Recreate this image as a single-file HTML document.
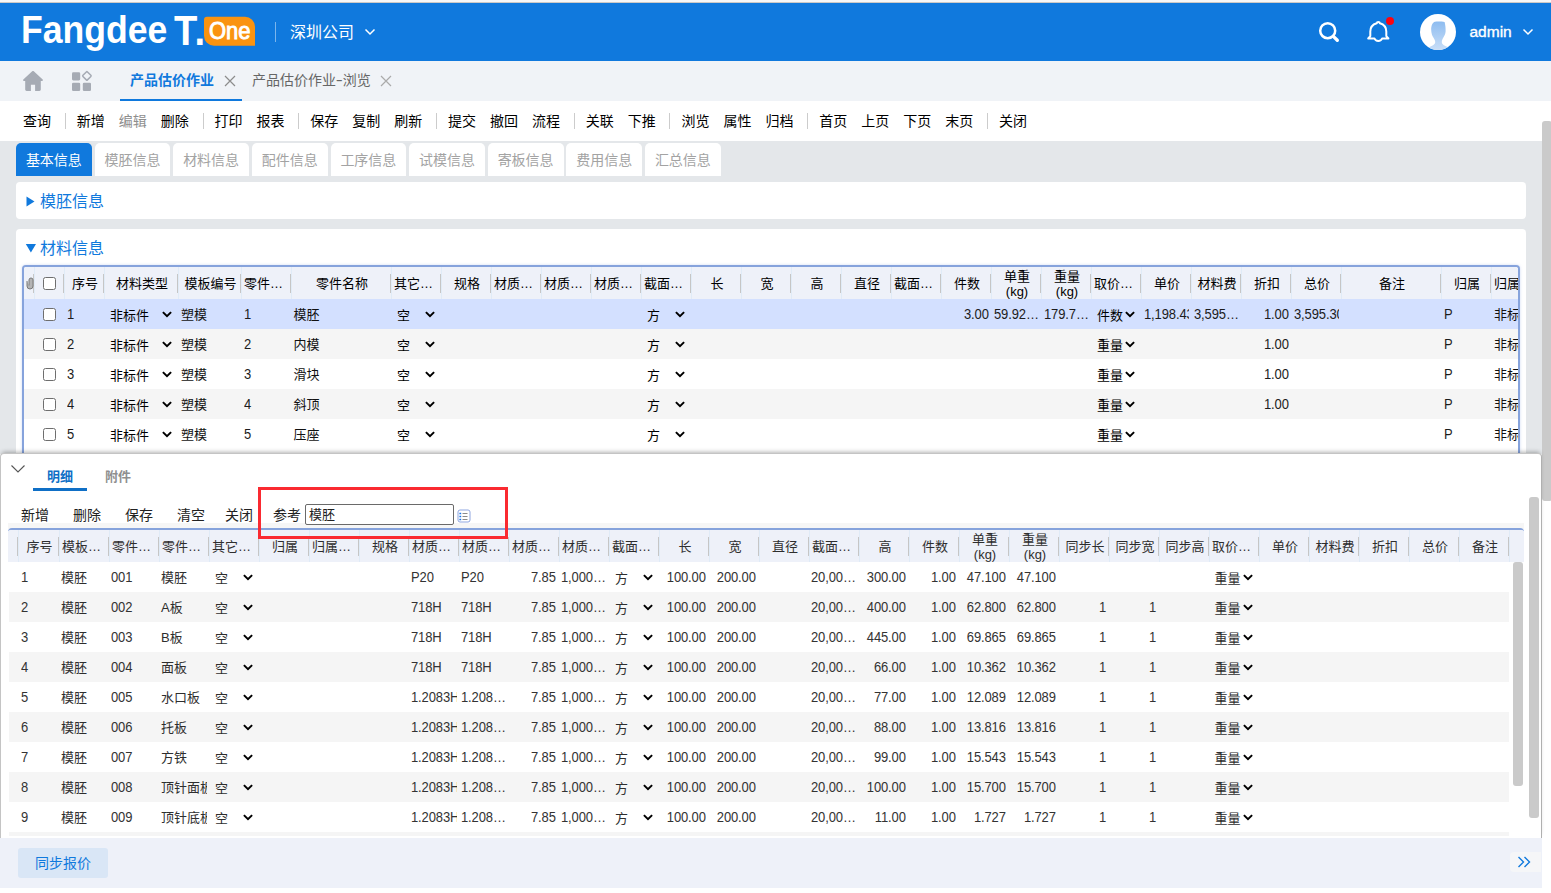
<!DOCTYPE html>
<html lang="zh-CN">
<head>
<meta charset="utf-8">
<title>Fangdee T.One - 产品估价作业</title>
<style>
*{box-sizing:border-box}
html,body{margin:0;padding:0}
body{width:1551px;height:893px;overflow:hidden;background:#fff;position:relative;
 font-family:"Liberation Sans","Noto Sans CJK SC",sans-serif;font-size:13px;color:#000;line-height:1}
.a{position:absolute}
svg{display:block}
#strip{left:0;top:0;width:1551px;height:3px;background:#f7f7f7;border-bottom:1px solid #cdc9c6}
/* header */
#hdr{left:0;top:3px;width:1551px;height:58px;background:#1079dd;color:#fff}
#logo{left:0;top:0;width:260px;height:58px;margin:0;font-size:38.9px;font-weight:bold}
#logo span{position:absolute;top:3px;height:48px;line-height:48px;white-space:nowrap;transform-origin:0 50%}
#lg1{left:21px;transform:scaleX(.915)}
#lg2{left:173.6px;font-size:42.4px;top:4px !important;transform:scaleX(.9);letter-spacing:1.6px}
#one{left:204px;top:13px;width:51px;height:29px;background:#fa9310;border-radius:3px 10px 0 10px;text-align:center;line-height:29px;font-size:23px;-webkit-text-stroke:.9px #fff;transform:translateY(.7px)}
#one span{display:inline-block;transform:scaleX(.955)}
#hdiv{left:275px;top:19px;width:1px;height:20px;background:rgba(255,255,255,.45)}
#comp{left:290px;top:19px;height:22px;line-height:22px;font-size:16px;white-space:nowrap}
#user{left:1469.5px;top:18px;height:22px;line-height:22px;font-size:15.5px;-webkit-text-stroke:.35px #fff}
#avatar{left:1420px;top:11px;width:36px;height:36px;border-radius:50%;background:#fff;overflow:hidden}
#face{width:36px;height:36px;background:linear-gradient(#8dbcf0 20%,#c9def7 100%);clip-path:path('M11.2 16 C11 12 12.5 8.2 15 7.7 C18 7.4 22 7.6 24.6 8 C25.3 11 25.8 14 25.6 17.5 C25.4 20 24.5 21.5 23.5 23.3 C22.5 25 21.8 26.5 21.8 28 C21.8 30.5 24.5 31.5 27.8 33 L27.8 36 L9.4 36 L9.4 33 C12.5 31.6 15.2 30.5 15.2 28 C15.2 26.500 14.3 25 13.2 23.3 C12.2 21.5 11.3 19.5 11.2 16z')}
#dot{left:1386px;top:14px;width:8px;height:8px;border-radius:50%;background:#fb0411}
/* page tabs */
#tabs{left:0;top:61px;width:1551px;height:40px;background:#f0f3f7}
.pt{top:0;height:38px;line-height:38px;font-size:14px;white-space:nowrap;color:#666}
.pt.on{color:#1079dd;font-weight:bold}
#ptline{left:120px;top:38px;width:122px;height:2px;background:#1079dd}
/* main toolbar */
#tb{left:0;top:101px;width:1551px;height:40px;background:#fff}
.tbi{top:0;height:40px;line-height:40px;width:42px;text-align:center;font-size:14px;color:#000;white-space:nowrap}
.tbi.dis{color:#8e8e8e}
.sep{top:12px;width:1px;height:16px;background:#ccc}
/* content */
#content{left:0;top:141px;width:1551px;height:313px;background:#e4e7ea}
.st{top:2px;height:33px;width:75.75px;line-height:35px;text-align:center;font-size:14px;background:#fff;color:#a3a3a3;border-radius:5px 5px 0 0}
.st.on{background:#1079dd;color:#fff}
.card{background:#fff;border-radius:4px}
.ct{font-size:16px;color:#1079dd;white-space:nowrap;line-height:22px;height:22px;margin:0;font-weight:normal}
/* grids */
.grid{overflow:hidden}
.gh{background:#eef1f9;overflow:hidden}
.hc{top:0;text-align:center;white-space:nowrap;overflow:hidden;font-size:13px;color:#000;border-right:1px solid #e0ebf7;padding:1px 2px 0 3px}
.hc.l{text-align:left;padding-left:2px}
.hc i{position:absolute;right:0;top:7px;width:1px;height:19px;background:#c6c6c6}
.hc.two{line-height:15px;padding-top:2px;white-space:normal}
.row{left:0;height:30px}
.c{top:0;height:30px;line-height:32px;white-space:nowrap;overflow:hidden;font-size:13px;padding:0 2px;width:50px;color:#111}
.c.e{text-overflow:ellipsis}
.c.r{text-align:right;padding-right:3.2px}
.c.m{text-align:center}
.c.n{letter-spacing:-.12px;transform:scaleY(1.1);transform-origin:0 20.5px;color:#1c1c1c}
.cb{width:13px;height:13px;border:1px solid #6e6e6e;border-radius:2.500px;background:#fff}
.sel{top:0;height:30px;line-height:33px;font-size:13px;white-space:nowrap;color:#000}
/* scroll thumbs */
.thumb{background:#cacaca;border-radius:3px}
/* detail panel */
#panel{left:0;top:453px;width:1542px;height:386px;background:#fff;border:1px solid #c4c4c4;border-right-color:#b0b0b0;border-bottom:0;border-radius:4px 4px 0 0;box-shadow:0 -3px 4px -2px rgba(0,0,0,.3)}
.dt{font-size:13px;font-weight:bold;white-space:nowrap;height:20px;line-height:22px}
.dbi{font-size:14px;white-space:nowrap;height:20px;line-height:20px;color:#222}
#ref{border:1px solid #6a6a6a;border-radius:2px;background:#fff;font-size:13px;line-height:20px;padding:0 3px;white-space:nowrap;color:#222}
#redbox{left:258px;top:487px;width:250px;height:52px;border:3px solid #fa2a31}
#panel .hc,#panel .c,#panel .sel{color:#2e2e2e}
#panel .c.n{color:#333}
/* bottom bar */
#bar{left:0;top:838px;width:1542px;height:50px;background:#eef1f9}
#sync{left:18px;top:10px;width:90px;height:30px;line-height:31px;text-align:center;background:#d9e6f6;border-radius:3px;color:#1079dd;font-size:14px}
#more{left:1510px;top:14px;width:31px;height:20px;background:#f5f6f8;border-radius:4px 0 0 4px}
</style>
</head>
<body>
<div id="strip" class="a"></div>
<header id="hdr" class="a">
<h1 id="logo" class="a"><span id="lg1">Fangdee</span><span id="lg2">T.</span></h1>
<div id="one" class="a"><span>One</span></div>
<div id="hdiv" class="a"></div>
<div id="comp" class="a">深圳公司</div>
<svg class="a" style="left:364px;top:25px" width="12" height="8" viewBox="0 0 12 8"><path d="M1.500 1.500 L6 6 L10.500 1.500" fill="none" stroke="#fff" stroke-width="1.500"/></svg>
<svg class="a" style="left:1317px;top:17px" width="24" height="24" viewBox="0 0 24 24"><circle cx="10.700" cy="10.700" r="7.500" fill="none" stroke="#fff" stroke-width="2.500"/><path d="M16.600 16.600 L20.300 20.200" stroke="#fff" stroke-width="3.400" stroke-linecap="round"/></svg>
<svg class="a" style="left:1366px;top:16px" width="24" height="24" viewBox="0 0 24 24"><path d="M12.300 2.900 c-.900 0-1.500.600-1.600 1.400 C7 5.400 4.300 8.600 4.300 12.600 v4.500 l-2.100 2.400 h6.300 c.500 1.500 2 2.400 3.800 2.400 s3.300-.900 3.800-2.400 h6.300 l-2.100-2.400 v-4.500 c0-4-2.700-7.200-6.400-8.300 c-.100-.800-.700-1.400-1.600-1.400z" fill="none" stroke="#fff" stroke-width="2" stroke-linejoin="round"/></svg>
<div id="dot" class="a"></div>
<div id="avatar" class="a"><div id="face"></div></div>
<div id="user" class="a">admin</div>
<svg class="a" style="left:1521.6px;top:25px" width="12" height="8" viewBox="0 0 12 8"><path d="M1.500 1.500 L6 6 L10.500 1.500" fill="none" stroke="#fff" stroke-width="1.500"/></svg>
</header>
<nav id="tabs" class="a">
<svg class="a" style="left:22px;top:9px" width="22" height="22" viewBox="0 0 22 22"><path d="M10.200 1.300 C10.700 .900 11.300 .900 11.800 1.300 L20.700 9.600 C21.200 10.100 20.900 10.900 20.200 10.900 L18.800 10.900 L18.800 19.600 C18.800 20.400 18.200 21 17.400 21 L13.100 21 L13.100 14.700 L8.900 14.700 L8.900 21 L4.600 21 C3.800 21 3.200 20.400 3.200 19.600 L3.200 10.900 L1.800 10.900 C1.100 10.900 .800 10.100 1.300 9.600z" fill="#a6abb4"/></svg>
<svg class="a" style="left:71px;top:9px" width="22" height="22" viewBox="0 0 22 22"><rect x="1" y="2.200" width="8.200" height="8.200" rx="1.300" fill="#a6abb4"/><rect x="1" y="12.800" width="8.200" height="8.200" rx="1.300" fill="#a6abb4"/><rect x="11.800" y="12.800" width="8.200" height="8.200" rx="1.300" fill="#a6abb4"/><rect x="12.700" y="2.700" width="6.400" height="6.400" rx=".8" fill="none" stroke="#a6abb4" stroke-width="1.500" transform="rotate(45 15.900 5.900)"/></svg>
<div class="a pt on" style="left:130px">产品估价作业</div>
<svg class="a" style="left:224px;top:14px" width="12" height="12" viewBox="0 0 12 12"><path d="M1 1 L11 11 M11 1 L1 11" stroke="#8c8c8c" stroke-width="1.200" fill="none"/></svg>
<div class="a pt" style="left:252px">产品估价作业<span style="display:inline-block;transform:scaleX(1.5);margin:0 1px">-</span>浏览</div>
<svg class="a" style="left:380px;top:14px" width="12" height="12" viewBox="0 0 12 12"><path d="M1 1 L11 11 M11 1 L1 11" stroke="#aaa" stroke-width="1.200" fill="none"/></svg>
<div id="ptline" class="a"></div>
</nav>
<div id="tb" class="a">
<span class="a tbi" style="left:16px">查询</span><span class="a sep" style="left:65px"></span><span class="a tbi" style="left:69.75px">新增</span><span class="a tbi dis" style="left:111.75px">编辑</span><span class="a tbi" style="left:153.75px">删除</span><span class="a sep" style="left:203px"></span><span class="a tbi" style="left:207.5px">打印</span><span class="a tbi" style="left:249.5px">报表</span><span class="a sep" style="left:298px"></span><span class="a tbi" style="left:303.25px">保存</span><span class="a tbi" style="left:345.25px">复制</span><span class="a tbi" style="left:387.25px">刷新</span><span class="a sep" style="left:436px"></span><span class="a tbi" style="left:441px">提交</span><span class="a tbi" style="left:483px">撤回</span><span class="a tbi" style="left:525px">流程</span><span class="a sep" style="left:574px"></span><span class="a tbi" style="left:578.75px">关联</span><span class="a tbi" style="left:620.75px">下推</span><span class="a sep" style="left:669px"></span><span class="a tbi" style="left:674.5px">浏览</span><span class="a tbi" style="left:716.5px">属性</span><span class="a tbi" style="left:758.5px">归档</span><span class="a sep" style="left:807px"></span><span class="a tbi" style="left:812.25px">首页</span><span class="a tbi" style="left:854.25px">上页</span><span class="a tbi" style="left:896.25px">下页</span><span class="a tbi" style="left:938.25px">末页</span><span class="a sep" style="left:987px"></span><span class="a tbi" style="left:992px">关闭</span>
</div>
<main id="content" class="a">
<div class="a st on" style="left:16px">基本信息</div><div class="a st" style="left:94.625px">模胚信息</div><div class="a st" style="left:173.25px">材料信息</div><div class="a st" style="left:251.875px">配件信息</div><div class="a st" style="left:330.5px">工序信息</div><div class="a st" style="left:409.125px">试模信息</div><div class="a st" style="left:487.75px">寄板信息</div><div class="a st" style="left:566.375px">费用信息</div><div class="a st" style="left:645px">汇总信息</div>
<section class="a card" style="left:16px;top:41px;width:1510px;height:37px"><svg class="a" style="left:10px;top:14px" width="9" height="11" viewBox="0 0 9 11"><path d="M0.500 0.500 L8.500 5.500 L0.500 10.500z" fill="#1079dd"/></svg><h2 class="a ct" style="left:24px;top:9px">模胚信息</h2></section>
<section class="a card" style="left:16px;top:88px;width:1510px;height:240px;border-radius:4px 4px 0 0"><svg class="a" style="left:9px;top:14px" width="12" height="10" viewBox="0 0 12 10"><path d="M0.800 1 L11 1 L5.900 9.400z" fill="#1079dd"/></svg><h2 class="a ct" style="left:24px;top:9px">材料信息</h2>
<div class="a grid" style="left:6px;top:36px;width:1498px;height:200px;border:2px solid #86a3dc;border-bottom:0;border-radius:4px 4px 0 0;background:#fff;box-shadow:0 0 3px rgba(120,150,220,.35)">
<div class="a gh" style="left:0;top:0;width:1494px;height:32px"><div class="a hc" style="left:0px;width:11px;height:32px;line-height:32px"><i></i></div><div class="a hc" style="left:11px;width:30px;height:32px;line-height:32px"><i></i></div><div class="a hc" style="left:41px;width:40px;height:32px;line-height:32px">序号<i></i></div><div class="a hc" style="left:81px;width:74px;height:32px;line-height:32px">材料类型<i></i></div><div class="a hc" style="left:155px;width:63px;height:32px;line-height:32px">模板编号<i></i></div><div class="a hc l" style="left:218px;width:50px;height:32px;line-height:32px">零件…<i></i></div><div class="a hc" style="left:268px;width:100px;height:32px;line-height:32px">零件名称<i></i></div><div class="a hc l" style="left:368px;width:50px;height:32px;line-height:32px">其它…<i></i></div><div class="a hc" style="left:418px;width:50px;height:32px;line-height:32px">规格<i></i></div><div class="a hc l" style="left:468px;width:50px;height:32px;line-height:32px">材质…<i></i></div><div class="a hc l" style="left:518px;width:50px;height:32px;line-height:32px">材质…<i></i></div><div class="a hc l" style="left:568px;width:50px;height:32px;line-height:32px">材质…<i></i></div><div class="a hc l" style="left:618px;width:50px;height:32px;line-height:32px">截面…<i></i></div><div class="a hc" style="left:668px;width:50px;height:32px;line-height:32px">长<i></i></div><div class="a hc" style="left:718px;width:50px;height:32px;line-height:32px">宽<i></i></div><div class="a hc" style="left:768px;width:50px;height:32px;line-height:32px">高<i></i></div><div class="a hc" style="left:818px;width:50px;height:32px;line-height:32px">直径<i></i></div><div class="a hc l" style="left:868px;width:50px;height:32px;line-height:32px">截面…<i></i></div><div class="a hc" style="left:918px;width:50px;height:32px;line-height:32px">件数<i></i></div><div class="a hc two" style="left:968px;width:50px;height:32px;">单重<br>(kg)<i></i></div><div class="a hc two" style="left:1018px;width:50px;height:32px;">重量<br>(kg)<i></i></div><div class="a hc l" style="left:1068px;width:50px;height:32px;line-height:32px">取价…<i></i></div><div class="a hc" style="left:1118px;width:50px;height:32px;line-height:32px">单价<i></i></div><div class="a hc" style="left:1168px;width:50px;height:32px;line-height:32px">材料费<i></i></div><div class="a hc" style="left:1218px;width:50px;height:32px;line-height:32px">折扣<i></i></div><div class="a hc" style="left:1268px;width:50px;height:32px;line-height:32px">总价<i></i></div><div class="a hc" style="left:1318px;width:100px;height:32px;line-height:32px">备注<i></i></div><div class="a hc" style="left:1418px;width:50px;height:32px;line-height:32px">归属<i></i></div><div class="a hc l" style="left:1468px;width:50px;height:32px;line-height:32px">归属…<i></i></div><svg class="a" style="left:1.5px;top:10px" width="8" height="13" viewBox="0 0 8 13"><path d="M1 4 v5 a3 3 0 0 0 6 0 v-6 a2 2 0 0 0 -4 0 v5.500" fill="#b4b4b4" stroke="#7a7a7a" stroke-width="1"/></svg><span class="a cb" style="left:19px;top:10px"></span></div>
<div class="a row" style="top:32px;width:1494px;background:#d3e0ff"><span class="a cb" style="left:19px;top:9px"></span><div class="a c n" style="left:41px;width:40px">1</div><div class="a sel" style="left:86px">非标件</div><svg class="a" style="left:138px;top:11.5px" width="10" height="7" viewBox="0 0 10 7"><path d="M0.900 1.100 L5 5.200 L9.100 1.100" fill="none" stroke="#000" stroke-width="2"/></svg><div class="a c" style="left:155px;width:63px">塑模</div><div class="a c n" style="left:218px;width:50px">1</div><div class="a c" style="left:268px;width:100px;padding-left:1.5px">模胚</div><div class="a sel" style="left:373px">空</div><svg class="a" style="left:401px;top:11.5px" width="10" height="7" viewBox="0 0 10 7"><path d="M0.900 1.100 L5 5.200 L9.100 1.100" fill="none" stroke="#000" stroke-width="2"/></svg><div class="a sel" style="left:623px">方</div><svg class="a" style="left:651px;top:11.5px" width="10" height="7" viewBox="0 0 10 7"><path d="M0.900 1.100 L5 5.200 L9.100 1.100" fill="none" stroke="#000" stroke-width="2"/></svg><div class="a c r n" style="left:918px;width:50px">3.00</div><div class="a c e n" style="left:968px;width:50px">59.923400</div><div class="a c e n" style="left:1018px;width:50px">179.7702</div><div class="a sel" style="left:1073px">件数</div><svg class="a" style="left:1101px;top:11.5px" width="10" height="7" viewBox="0 0 10 7"><path d="M0.900 1.100 L5 5.200 L9.100 1.100" fill="none" stroke="#000" stroke-width="2"/></svg><div class="a c n" style="left:1118px;width:50px;width:47px;padding-right:0">1,198.43</div><div class="a c e n" style="left:1168px;width:50px">3,595.30</div><div class="a c r n" style="left:1218px;width:50px">1.00</div><div class="a c n" style="left:1268px;width:50px;width:47px;padding-right:0">3,595.30</div><div class="a c n" style="left:1418px;width:50px">P</div><div class="a c" style="left:1468px;width:50px">非标件</div></div>
<div class="a row" style="top:62px;width:1494px;background:#f5f5f5"><span class="a cb" style="left:19px;top:9px"></span><div class="a c n" style="left:41px;width:40px">2</div><div class="a sel" style="left:86px">非标件</div><svg class="a" style="left:138px;top:11.5px" width="10" height="7" viewBox="0 0 10 7"><path d="M0.900 1.100 L5 5.200 L9.100 1.100" fill="none" stroke="#000" stroke-width="2"/></svg><div class="a c" style="left:155px;width:63px">塑模</div><div class="a c n" style="left:218px;width:50px">2</div><div class="a c" style="left:268px;width:100px;padding-left:1.5px">内模</div><div class="a sel" style="left:373px">空</div><svg class="a" style="left:401px;top:11.5px" width="10" height="7" viewBox="0 0 10 7"><path d="M0.900 1.100 L5 5.200 L9.100 1.100" fill="none" stroke="#000" stroke-width="2"/></svg><div class="a sel" style="left:623px">方</div><svg class="a" style="left:651px;top:11.5px" width="10" height="7" viewBox="0 0 10 7"><path d="M0.900 1.100 L5 5.200 L9.100 1.100" fill="none" stroke="#000" stroke-width="2"/></svg><div class="a sel" style="left:1073px">重量</div><svg class="a" style="left:1101px;top:11.5px" width="10" height="7" viewBox="0 0 10 7"><path d="M0.900 1.100 L5 5.200 L9.100 1.100" fill="none" stroke="#000" stroke-width="2"/></svg><div class="a c r n" style="left:1218px;width:50px">1.00</div><div class="a c n" style="left:1418px;width:50px">P</div><div class="a c" style="left:1468px;width:50px">非标件</div></div>
<div class="a row" style="top:92px;width:1494px;background:#fff"><span class="a cb" style="left:19px;top:9px"></span><div class="a c n" style="left:41px;width:40px">3</div><div class="a sel" style="left:86px">非标件</div><svg class="a" style="left:138px;top:11.5px" width="10" height="7" viewBox="0 0 10 7"><path d="M0.900 1.100 L5 5.200 L9.100 1.100" fill="none" stroke="#000" stroke-width="2"/></svg><div class="a c" style="left:155px;width:63px">塑模</div><div class="a c n" style="left:218px;width:50px">3</div><div class="a c" style="left:268px;width:100px;padding-left:1.5px">滑块</div><div class="a sel" style="left:373px">空</div><svg class="a" style="left:401px;top:11.5px" width="10" height="7" viewBox="0 0 10 7"><path d="M0.900 1.100 L5 5.200 L9.100 1.100" fill="none" stroke="#000" stroke-width="2"/></svg><div class="a sel" style="left:623px">方</div><svg class="a" style="left:651px;top:11.5px" width="10" height="7" viewBox="0 0 10 7"><path d="M0.900 1.100 L5 5.200 L9.100 1.100" fill="none" stroke="#000" stroke-width="2"/></svg><div class="a sel" style="left:1073px">重量</div><svg class="a" style="left:1101px;top:11.5px" width="10" height="7" viewBox="0 0 10 7"><path d="M0.900 1.100 L5 5.200 L9.100 1.100" fill="none" stroke="#000" stroke-width="2"/></svg><div class="a c r n" style="left:1218px;width:50px">1.00</div><div class="a c n" style="left:1418px;width:50px">P</div><div class="a c" style="left:1468px;width:50px">非标件</div></div>
<div class="a row" style="top:122px;width:1494px;background:#f5f5f5"><span class="a cb" style="left:19px;top:9px"></span><div class="a c n" style="left:41px;width:40px">4</div><div class="a sel" style="left:86px">非标件</div><svg class="a" style="left:138px;top:11.5px" width="10" height="7" viewBox="0 0 10 7"><path d="M0.900 1.100 L5 5.200 L9.100 1.100" fill="none" stroke="#000" stroke-width="2"/></svg><div class="a c" style="left:155px;width:63px">塑模</div><div class="a c n" style="left:218px;width:50px">4</div><div class="a c" style="left:268px;width:100px;padding-left:1.5px">斜顶</div><div class="a sel" style="left:373px">空</div><svg class="a" style="left:401px;top:11.5px" width="10" height="7" viewBox="0 0 10 7"><path d="M0.900 1.100 L5 5.200 L9.100 1.100" fill="none" stroke="#000" stroke-width="2"/></svg><div class="a sel" style="left:623px">方</div><svg class="a" style="left:651px;top:11.5px" width="10" height="7" viewBox="0 0 10 7"><path d="M0.900 1.100 L5 5.200 L9.100 1.100" fill="none" stroke="#000" stroke-width="2"/></svg><div class="a sel" style="left:1073px">重量</div><svg class="a" style="left:1101px;top:11.5px" width="10" height="7" viewBox="0 0 10 7"><path d="M0.900 1.100 L5 5.200 L9.100 1.100" fill="none" stroke="#000" stroke-width="2"/></svg><div class="a c r n" style="left:1218px;width:50px">1.00</div><div class="a c n" style="left:1418px;width:50px">P</div><div class="a c" style="left:1468px;width:50px">非标件</div></div>
<div class="a row" style="top:152px;width:1494px;background:#fff"><span class="a cb" style="left:19px;top:9px"></span><div class="a c n" style="left:41px;width:40px">5</div><div class="a sel" style="left:86px">非标件</div><svg class="a" style="left:138px;top:11.5px" width="10" height="7" viewBox="0 0 10 7"><path d="M0.900 1.100 L5 5.200 L9.100 1.100" fill="none" stroke="#000" stroke-width="2"/></svg><div class="a c" style="left:155px;width:63px">塑模</div><div class="a c n" style="left:218px;width:50px">5</div><div class="a c" style="left:268px;width:100px;padding-left:1.5px">压座</div><div class="a sel" style="left:373px">空</div><svg class="a" style="left:401px;top:11.5px" width="10" height="7" viewBox="0 0 10 7"><path d="M0.900 1.100 L5 5.200 L9.100 1.100" fill="none" stroke="#000" stroke-width="2"/></svg><div class="a sel" style="left:623px">方</div><svg class="a" style="left:651px;top:11.5px" width="10" height="7" viewBox="0 0 10 7"><path d="M0.900 1.100 L5 5.200 L9.100 1.100" fill="none" stroke="#000" stroke-width="2"/></svg><div class="a sel" style="left:1073px">重量</div><svg class="a" style="left:1101px;top:11.5px" width="10" height="7" viewBox="0 0 10 7"><path d="M0.900 1.100 L5 5.200 L9.100 1.100" fill="none" stroke="#000" stroke-width="2"/></svg><div class="a c n" style="left:1418px;width:50px">P</div><div class="a c" style="left:1468px;width:50px">非标件</div></div>
</div>
</section>
</main>
<div class="a thumb" style="left:1542px;top:121px;width:10px;height:380px"></div>
<section id="panel" class="a">
<svg class="a" style="left:9px;top:10px" width="16" height="10" viewBox="0 0 16 10"><path d="M1.500 1.500 L8 8 L14.500 1.500" fill="none" stroke="#555" stroke-width="1.100"/></svg>
<div class="a dt" style="left:46px;top:12px;color:#0f6fc6">明细</div><div class="a" style="left:32px;top:34px;width:54px;height:3px;background:#0f6fc6"></div><div class="a dt" style="left:104px;top:12px;color:#8f8f8f">附件</div>
<div class="a" style="left:7px;top:69px;width:1516px;height:6px;background:#f6f6f6"></div>
<span class="a dbi" style="left:20px;top:51px">新增</span><span class="a dbi" style="left:72px;top:51px">删除</span><span class="a dbi" style="left:124px;top:51px">保存</span><span class="a dbi" style="left:176px;top:51px">清空</span><span class="a dbi" style="left:224px;top:51px">关闭</span><span class="a dbi" style="left:272px;top:51px">参考</span>
<div id="ref" class="a" style="left:304px;top:50px;width:149px;height:21px">模胚</div>
<svg class="a" style="left:456px;top:55px" width="14" height="14" viewBox="0 0 14 14"><rect x="1" y="1" width="12" height="12" rx="2" fill="#fff" stroke="#8fa6e0" stroke-width="1"/><path d="M2.400 4.500 h1.800 M2.400 7.500 h1.800 M2.400 10.500 h1.800" stroke="#1a74e8" stroke-width="1.600"/><path d="M5.500 4.500 h5 M5.500 7.500 h5 M5.500 10.500 h5" stroke="#8a8a8a" stroke-width="1"/></svg>
<div class="a grid" style="left:7px;top:74px;width:1516px;height:310px;border-top:2px solid #86a3dc;border-radius:4px 4px 0 0">
<div class="a gh" style="left:0;top:0;width:1516px;height:32px"><div class="a hc" style="left:0px;width:11px;height:32px;line-height:32px"><i></i></div><div class="a hc" style="left:11px;width:41px;height:32px;line-height:32px">序号<i></i></div><div class="a hc l" style="left:52px;width:50px;height:32px;line-height:32px">模板…<i></i></div><div class="a hc l" style="left:102px;width:50px;height:32px;line-height:32px">零件…<i></i></div><div class="a hc l" style="left:152px;width:50px;height:32px;line-height:32px">零件…<i></i></div><div class="a hc l" style="left:202px;width:50px;height:32px;line-height:32px">其它…<i></i></div><div class="a hc" style="left:252px;width:50px;height:32px;line-height:32px">归属<i></i></div><div class="a hc l" style="left:302px;width:50px;height:32px;line-height:32px">归属…<i></i></div><div class="a hc" style="left:352px;width:50px;height:32px;line-height:32px">规格<i></i></div><div class="a hc l" style="left:402px;width:50px;height:32px;line-height:32px">材质…<i></i></div><div class="a hc l" style="left:452px;width:50px;height:32px;line-height:32px">材质…<i></i></div><div class="a hc l" style="left:502px;width:50px;height:32px;line-height:32px">材质…<i></i></div><div class="a hc l" style="left:552px;width:50px;height:32px;line-height:32px">材质…<i></i></div><div class="a hc l" style="left:602px;width:50px;height:32px;line-height:32px">截面…<i></i></div><div class="a hc" style="left:652px;width:50px;height:32px;line-height:32px">长<i></i></div><div class="a hc" style="left:702px;width:50px;height:32px;line-height:32px">宽<i></i></div><div class="a hc" style="left:752px;width:50px;height:32px;line-height:32px">直径<i></i></div><div class="a hc l" style="left:802px;width:50px;height:32px;line-height:32px">截面…<i></i></div><div class="a hc" style="left:852px;width:50px;height:32px;line-height:32px">高<i></i></div><div class="a hc" style="left:902px;width:50px;height:32px;line-height:32px">件数<i></i></div><div class="a hc two" style="left:952px;width:50px;height:32px;">单重<br>(kg)<i></i></div><div class="a hc two" style="left:1002px;width:50px;height:32px;">重量<br>(kg)<i></i></div><div class="a hc" style="left:1052px;width:50px;height:32px;line-height:32px">同步长<i></i></div><div class="a hc" style="left:1102px;width:50px;height:32px;line-height:32px">同步宽<i></i></div><div class="a hc" style="left:1152px;width:50px;height:32px;line-height:32px">同步高<i></i></div><div class="a hc l" style="left:1202px;width:50px;height:32px;line-height:32px">取价…<i></i></div><div class="a hc" style="left:1252px;width:50px;height:32px;line-height:32px">单价<i></i></div><div class="a hc" style="left:1302px;width:50px;height:32px;line-height:32px">材料费<i></i></div><div class="a hc" style="left:1352px;width:50px;height:32px;line-height:32px">折扣<i></i></div><div class="a hc" style="left:1402px;width:50px;height:32px;line-height:32px">总价<i></i></div><div class="a hc" style="left:1452px;width:50px;height:32px;line-height:32px">备注<i></i></div></div>
<div class="a row" style="left:1px;top:32px;width:1500px;background:#fff"><div class="a c n" style="left:9px;width:41px;padding-left:3px">1</div><div class="a c" style="left:50px;width:50px">模胚</div><div class="a c n" style="left:100px;width:50px">001</div><div class="a c" style="left:150px;width:50px;width:48px;padding-right:0">模胚</div><div class="a sel" style="left:206px">空</div><svg class="a" style="left:234px;top:11.5px" width="10" height="7" viewBox="0 0 10 7"><path d="M0.900 1.100 L5 5.200 L9.100 1.100" fill="none" stroke="#000" stroke-width="2"/></svg><div class="a c n" style="left:400px;width:50px;width:48px">P20</div><div class="a c e n" style="left:450px;width:50px">P20</div><div class="a c r n" style="left:500px;width:50px">7.85</div><div class="a c e n" style="left:550px;width:50px">1,000,000</div><div class="a sel" style="left:606px">方</div><svg class="a" style="left:634px;top:11.5px" width="10" height="7" viewBox="0 0 10 7"><path d="M0.900 1.100 L5 5.200 L9.100 1.100" fill="none" stroke="#000" stroke-width="2"/></svg><div class="a c r n" style="left:650px;width:50px">100.00</div><div class="a c r n" style="left:700px;width:50px">200.00</div><div class="a c e n" style="left:800px;width:50px">20,000.00</div><div class="a c r n" style="left:850px;width:50px">300.00</div><div class="a c r n" style="left:900px;width:50px">1.00</div><div class="a c r n" style="left:950px;width:50px">47.100</div><div class="a c r n" style="left:1000px;width:50px">47.100</div><div class="a sel" style="left:1205.5px">重量</div><svg class="a" style="left:1234px;top:11.5px" width="10" height="7" viewBox="0 0 10 7"><path d="M0.900 1.100 L5 5.200 L9.100 1.100" fill="none" stroke="#000" stroke-width="2"/></svg></div>
<div class="a row" style="left:1px;top:62px;width:1500px;background:#f5f5f5"><div class="a c n" style="left:9px;width:41px;padding-left:3px">2</div><div class="a c" style="left:50px;width:50px">模胚</div><div class="a c n" style="left:100px;width:50px">002</div><div class="a c" style="left:150px;width:50px;width:48px;padding-right:0">A板</div><div class="a sel" style="left:206px">空</div><svg class="a" style="left:234px;top:11.5px" width="10" height="7" viewBox="0 0 10 7"><path d="M0.900 1.100 L5 5.200 L9.100 1.100" fill="none" stroke="#000" stroke-width="2"/></svg><div class="a c n" style="left:400px;width:50px;width:48px">718H</div><div class="a c e n" style="left:450px;width:50px">718H</div><div class="a c r n" style="left:500px;width:50px">7.85</div><div class="a c e n" style="left:550px;width:50px">1,000,000</div><div class="a sel" style="left:606px">方</div><svg class="a" style="left:634px;top:11.5px" width="10" height="7" viewBox="0 0 10 7"><path d="M0.900 1.100 L5 5.200 L9.100 1.100" fill="none" stroke="#000" stroke-width="2"/></svg><div class="a c r n" style="left:650px;width:50px">100.00</div><div class="a c r n" style="left:700px;width:50px">200.00</div><div class="a c e n" style="left:800px;width:50px">20,000.00</div><div class="a c r n" style="left:850px;width:50px">400.00</div><div class="a c r n" style="left:900px;width:50px">1.00</div><div class="a c r n" style="left:950px;width:50px">62.800</div><div class="a c r n" style="left:1000px;width:50px">62.800</div><div class="a c n" style="left:1050px;width:50px;padding-left:40px">1</div><div class="a c n" style="left:1100px;width:50px;padding-left:40px">1</div><div class="a sel" style="left:1205.5px">重量</div><svg class="a" style="left:1234px;top:11.5px" width="10" height="7" viewBox="0 0 10 7"><path d="M0.900 1.100 L5 5.200 L9.100 1.100" fill="none" stroke="#000" stroke-width="2"/></svg></div>
<div class="a row" style="left:1px;top:92px;width:1500px;background:#fff"><div class="a c n" style="left:9px;width:41px;padding-left:3px">3</div><div class="a c" style="left:50px;width:50px">模胚</div><div class="a c n" style="left:100px;width:50px">003</div><div class="a c" style="left:150px;width:50px;width:48px;padding-right:0">B板</div><div class="a sel" style="left:206px">空</div><svg class="a" style="left:234px;top:11.5px" width="10" height="7" viewBox="0 0 10 7"><path d="M0.900 1.100 L5 5.200 L9.100 1.100" fill="none" stroke="#000" stroke-width="2"/></svg><div class="a c n" style="left:400px;width:50px;width:48px">718H</div><div class="a c e n" style="left:450px;width:50px">718H</div><div class="a c r n" style="left:500px;width:50px">7.85</div><div class="a c e n" style="left:550px;width:50px">1,000,000</div><div class="a sel" style="left:606px">方</div><svg class="a" style="left:634px;top:11.5px" width="10" height="7" viewBox="0 0 10 7"><path d="M0.900 1.100 L5 5.200 L9.100 1.100" fill="none" stroke="#000" stroke-width="2"/></svg><div class="a c r n" style="left:650px;width:50px">100.00</div><div class="a c r n" style="left:700px;width:50px">200.00</div><div class="a c e n" style="left:800px;width:50px">20,000.00</div><div class="a c r n" style="left:850px;width:50px">445.00</div><div class="a c r n" style="left:900px;width:50px">1.00</div><div class="a c r n" style="left:950px;width:50px">69.865</div><div class="a c r n" style="left:1000px;width:50px">69.865</div><div class="a c n" style="left:1050px;width:50px;padding-left:40px">1</div><div class="a c n" style="left:1100px;width:50px;padding-left:40px">1</div><div class="a sel" style="left:1205.5px">重量</div><svg class="a" style="left:1234px;top:11.5px" width="10" height="7" viewBox="0 0 10 7"><path d="M0.900 1.100 L5 5.200 L9.100 1.100" fill="none" stroke="#000" stroke-width="2"/></svg></div>
<div class="a row" style="left:1px;top:122px;width:1500px;background:#f5f5f5"><div class="a c n" style="left:9px;width:41px;padding-left:3px">4</div><div class="a c" style="left:50px;width:50px">模胚</div><div class="a c n" style="left:100px;width:50px">004</div><div class="a c" style="left:150px;width:50px;width:48px;padding-right:0">面板</div><div class="a sel" style="left:206px">空</div><svg class="a" style="left:234px;top:11.5px" width="10" height="7" viewBox="0 0 10 7"><path d="M0.900 1.100 L5 5.200 L9.100 1.100" fill="none" stroke="#000" stroke-width="2"/></svg><div class="a c n" style="left:400px;width:50px;width:48px">718H</div><div class="a c e n" style="left:450px;width:50px">718H</div><div class="a c r n" style="left:500px;width:50px">7.85</div><div class="a c e n" style="left:550px;width:50px">1,000,000</div><div class="a sel" style="left:606px">方</div><svg class="a" style="left:634px;top:11.5px" width="10" height="7" viewBox="0 0 10 7"><path d="M0.900 1.100 L5 5.200 L9.100 1.100" fill="none" stroke="#000" stroke-width="2"/></svg><div class="a c r n" style="left:650px;width:50px">100.00</div><div class="a c r n" style="left:700px;width:50px">200.00</div><div class="a c e n" style="left:800px;width:50px">20,000.00</div><div class="a c r n" style="left:850px;width:50px">66.00</div><div class="a c r n" style="left:900px;width:50px">1.00</div><div class="a c r n" style="left:950px;width:50px">10.362</div><div class="a c r n" style="left:1000px;width:50px">10.362</div><div class="a c n" style="left:1050px;width:50px;padding-left:40px">1</div><div class="a c n" style="left:1100px;width:50px;padding-left:40px">1</div><div class="a sel" style="left:1205.5px">重量</div><svg class="a" style="left:1234px;top:11.5px" width="10" height="7" viewBox="0 0 10 7"><path d="M0.900 1.100 L5 5.200 L9.100 1.100" fill="none" stroke="#000" stroke-width="2"/></svg></div>
<div class="a row" style="left:1px;top:152px;width:1500px;background:#fff"><div class="a c n" style="left:9px;width:41px;padding-left:3px">5</div><div class="a c" style="left:50px;width:50px">模胚</div><div class="a c n" style="left:100px;width:50px">005</div><div class="a c" style="left:150px;width:50px;width:48px;padding-right:0">水口板</div><div class="a sel" style="left:206px">空</div><svg class="a" style="left:234px;top:11.5px" width="10" height="7" viewBox="0 0 10 7"><path d="M0.900 1.100 L5 5.200 L9.100 1.100" fill="none" stroke="#000" stroke-width="2"/></svg><div class="a c n" style="left:400px;width:50px;width:48px">1.2083H</div><div class="a c e n" style="left:450px;width:50px">1.2083H</div><div class="a c r n" style="left:500px;width:50px">7.85</div><div class="a c e n" style="left:550px;width:50px">1,000,000</div><div class="a sel" style="left:606px">方</div><svg class="a" style="left:634px;top:11.5px" width="10" height="7" viewBox="0 0 10 7"><path d="M0.900 1.100 L5 5.200 L9.100 1.100" fill="none" stroke="#000" stroke-width="2"/></svg><div class="a c r n" style="left:650px;width:50px">100.00</div><div class="a c r n" style="left:700px;width:50px">200.00</div><div class="a c e n" style="left:800px;width:50px">20,000.00</div><div class="a c r n" style="left:850px;width:50px">77.00</div><div class="a c r n" style="left:900px;width:50px">1.00</div><div class="a c r n" style="left:950px;width:50px">12.089</div><div class="a c r n" style="left:1000px;width:50px">12.089</div><div class="a c n" style="left:1050px;width:50px;padding-left:40px">1</div><div class="a c n" style="left:1100px;width:50px;padding-left:40px">1</div><div class="a sel" style="left:1205.5px">重量</div><svg class="a" style="left:1234px;top:11.5px" width="10" height="7" viewBox="0 0 10 7"><path d="M0.900 1.100 L5 5.200 L9.100 1.100" fill="none" stroke="#000" stroke-width="2"/></svg></div>
<div class="a row" style="left:1px;top:182px;width:1500px;background:#f5f5f5"><div class="a c n" style="left:9px;width:41px;padding-left:3px">6</div><div class="a c" style="left:50px;width:50px">模胚</div><div class="a c n" style="left:100px;width:50px">006</div><div class="a c" style="left:150px;width:50px;width:48px;padding-right:0">托板</div><div class="a sel" style="left:206px">空</div><svg class="a" style="left:234px;top:11.5px" width="10" height="7" viewBox="0 0 10 7"><path d="M0.900 1.100 L5 5.200 L9.100 1.100" fill="none" stroke="#000" stroke-width="2"/></svg><div class="a c n" style="left:400px;width:50px;width:48px">1.2083H</div><div class="a c e n" style="left:450px;width:50px">1.2083H</div><div class="a c r n" style="left:500px;width:50px">7.85</div><div class="a c e n" style="left:550px;width:50px">1,000,000</div><div class="a sel" style="left:606px">方</div><svg class="a" style="left:634px;top:11.5px" width="10" height="7" viewBox="0 0 10 7"><path d="M0.900 1.100 L5 5.200 L9.100 1.100" fill="none" stroke="#000" stroke-width="2"/></svg><div class="a c r n" style="left:650px;width:50px">100.00</div><div class="a c r n" style="left:700px;width:50px">200.00</div><div class="a c e n" style="left:800px;width:50px">20,000.00</div><div class="a c r n" style="left:850px;width:50px">88.00</div><div class="a c r n" style="left:900px;width:50px">1.00</div><div class="a c r n" style="left:950px;width:50px">13.816</div><div class="a c r n" style="left:1000px;width:50px">13.816</div><div class="a c n" style="left:1050px;width:50px;padding-left:40px">1</div><div class="a c n" style="left:1100px;width:50px;padding-left:40px">1</div><div class="a sel" style="left:1205.5px">重量</div><svg class="a" style="left:1234px;top:11.5px" width="10" height="7" viewBox="0 0 10 7"><path d="M0.900 1.100 L5 5.200 L9.100 1.100" fill="none" stroke="#000" stroke-width="2"/></svg></div>
<div class="a row" style="left:1px;top:212px;width:1500px;background:#fff"><div class="a c n" style="left:9px;width:41px;padding-left:3px">7</div><div class="a c" style="left:50px;width:50px">模胚</div><div class="a c n" style="left:100px;width:50px">007</div><div class="a c" style="left:150px;width:50px;width:48px;padding-right:0">方铁</div><div class="a sel" style="left:206px">空</div><svg class="a" style="left:234px;top:11.5px" width="10" height="7" viewBox="0 0 10 7"><path d="M0.900 1.100 L5 5.200 L9.100 1.100" fill="none" stroke="#000" stroke-width="2"/></svg><div class="a c n" style="left:400px;width:50px;width:48px">1.2083H</div><div class="a c e n" style="left:450px;width:50px">1.2083H</div><div class="a c r n" style="left:500px;width:50px">7.85</div><div class="a c e n" style="left:550px;width:50px">1,000,000</div><div class="a sel" style="left:606px">方</div><svg class="a" style="left:634px;top:11.5px" width="10" height="7" viewBox="0 0 10 7"><path d="M0.900 1.100 L5 5.200 L9.100 1.100" fill="none" stroke="#000" stroke-width="2"/></svg><div class="a c r n" style="left:650px;width:50px">100.00</div><div class="a c r n" style="left:700px;width:50px">200.00</div><div class="a c e n" style="left:800px;width:50px">20,000.00</div><div class="a c r n" style="left:850px;width:50px">99.00</div><div class="a c r n" style="left:900px;width:50px">1.00</div><div class="a c r n" style="left:950px;width:50px">15.543</div><div class="a c r n" style="left:1000px;width:50px">15.543</div><div class="a c n" style="left:1050px;width:50px;padding-left:40px">1</div><div class="a c n" style="left:1100px;width:50px;padding-left:40px">1</div><div class="a sel" style="left:1205.5px">重量</div><svg class="a" style="left:1234px;top:11.5px" width="10" height="7" viewBox="0 0 10 7"><path d="M0.900 1.100 L5 5.200 L9.100 1.100" fill="none" stroke="#000" stroke-width="2"/></svg></div>
<div class="a row" style="left:1px;top:242px;width:1500px;background:#f5f5f5"><div class="a c n" style="left:9px;width:41px;padding-left:3px">8</div><div class="a c" style="left:50px;width:50px">模胚</div><div class="a c n" style="left:100px;width:50px">008</div><div class="a c" style="left:150px;width:50px;width:48px;padding-right:0">顶针面板</div><div class="a sel" style="left:206px">空</div><svg class="a" style="left:234px;top:11.5px" width="10" height="7" viewBox="0 0 10 7"><path d="M0.900 1.100 L5 5.200 L9.100 1.100" fill="none" stroke="#000" stroke-width="2"/></svg><div class="a c n" style="left:400px;width:50px;width:48px">1.2083H</div><div class="a c e n" style="left:450px;width:50px">1.2083H</div><div class="a c r n" style="left:500px;width:50px">7.85</div><div class="a c e n" style="left:550px;width:50px">1,000,000</div><div class="a sel" style="left:606px">方</div><svg class="a" style="left:634px;top:11.5px" width="10" height="7" viewBox="0 0 10 7"><path d="M0.900 1.100 L5 5.200 L9.100 1.100" fill="none" stroke="#000" stroke-width="2"/></svg><div class="a c r n" style="left:650px;width:50px">100.00</div><div class="a c r n" style="left:700px;width:50px">200.00</div><div class="a c e n" style="left:800px;width:50px">20,000.00</div><div class="a c r n" style="left:850px;width:50px">100.00</div><div class="a c r n" style="left:900px;width:50px">1.00</div><div class="a c r n" style="left:950px;width:50px">15.700</div><div class="a c r n" style="left:1000px;width:50px">15.700</div><div class="a c n" style="left:1050px;width:50px;padding-left:40px">1</div><div class="a c n" style="left:1100px;width:50px;padding-left:40px">1</div><div class="a sel" style="left:1205.5px">重量</div><svg class="a" style="left:1234px;top:11.5px" width="10" height="7" viewBox="0 0 10 7"><path d="M0.900 1.100 L5 5.200 L9.100 1.100" fill="none" stroke="#000" stroke-width="2"/></svg></div>
<div class="a row" style="left:1px;top:272px;width:1500px;background:#fff"><div class="a c n" style="left:9px;width:41px;padding-left:3px">9</div><div class="a c" style="left:50px;width:50px">模胚</div><div class="a c n" style="left:100px;width:50px">009</div><div class="a c" style="left:150px;width:50px;width:48px;padding-right:0">顶针底板</div><div class="a sel" style="left:206px">空</div><svg class="a" style="left:234px;top:11.5px" width="10" height="7" viewBox="0 0 10 7"><path d="M0.900 1.100 L5 5.200 L9.100 1.100" fill="none" stroke="#000" stroke-width="2"/></svg><div class="a c n" style="left:400px;width:50px;width:48px">1.2083H</div><div class="a c e n" style="left:450px;width:50px">1.2083H</div><div class="a c r n" style="left:500px;width:50px">7.85</div><div class="a c e n" style="left:550px;width:50px">1,000,000</div><div class="a sel" style="left:606px">方</div><svg class="a" style="left:634px;top:11.5px" width="10" height="7" viewBox="0 0 10 7"><path d="M0.900 1.100 L5 5.200 L9.100 1.100" fill="none" stroke="#000" stroke-width="2"/></svg><div class="a c r n" style="left:650px;width:50px">100.00</div><div class="a c r n" style="left:700px;width:50px">200.00</div><div class="a c e n" style="left:800px;width:50px">20,000.00</div><div class="a c r n" style="left:850px;width:50px">11.00</div><div class="a c r n" style="left:900px;width:50px">1.00</div><div class="a c r n" style="left:950px;width:50px">1.727</div><div class="a c r n" style="left:1000px;width:50px">1.727</div><div class="a c n" style="left:1050px;width:50px;padding-left:40px">1</div><div class="a c n" style="left:1100px;width:50px;padding-left:40px">1</div><div class="a sel" style="left:1205.5px">重量</div><svg class="a" style="left:1234px;top:11.5px" width="10" height="7" viewBox="0 0 10 7"><path d="M0.900 1.100 L5 5.200 L9.100 1.100" fill="none" stroke="#000" stroke-width="2"/></svg></div>
<div class="a row" style="left:1px;top:302px;width:1500px;height:4px;background:#f5f5f5"></div>
</div>
<div class="a thumb" style="left:1512px;top:108px;width:10px;height:224px"></div>
<div class="a thumb" style="left:1528px;top:43px;width:10px;height:321px"></div>
</section>
<div id="redbox" class="a"></div>
<footer id="bar" class="a">
<div id="sync" class="a">同步报价</div>
<div id="more" class="a"><svg class="a" style="left:7px;top:4px" width="14" height="12" viewBox="0 0 14 12"><path d="M1.500 1 L6.500 6 L1.500 11 M7.500 1 L12.500 6 L7.500 11" fill="none" stroke="#1079dd" stroke-width="1.400"/></svg></div>
</footer>
</body>
</html>
